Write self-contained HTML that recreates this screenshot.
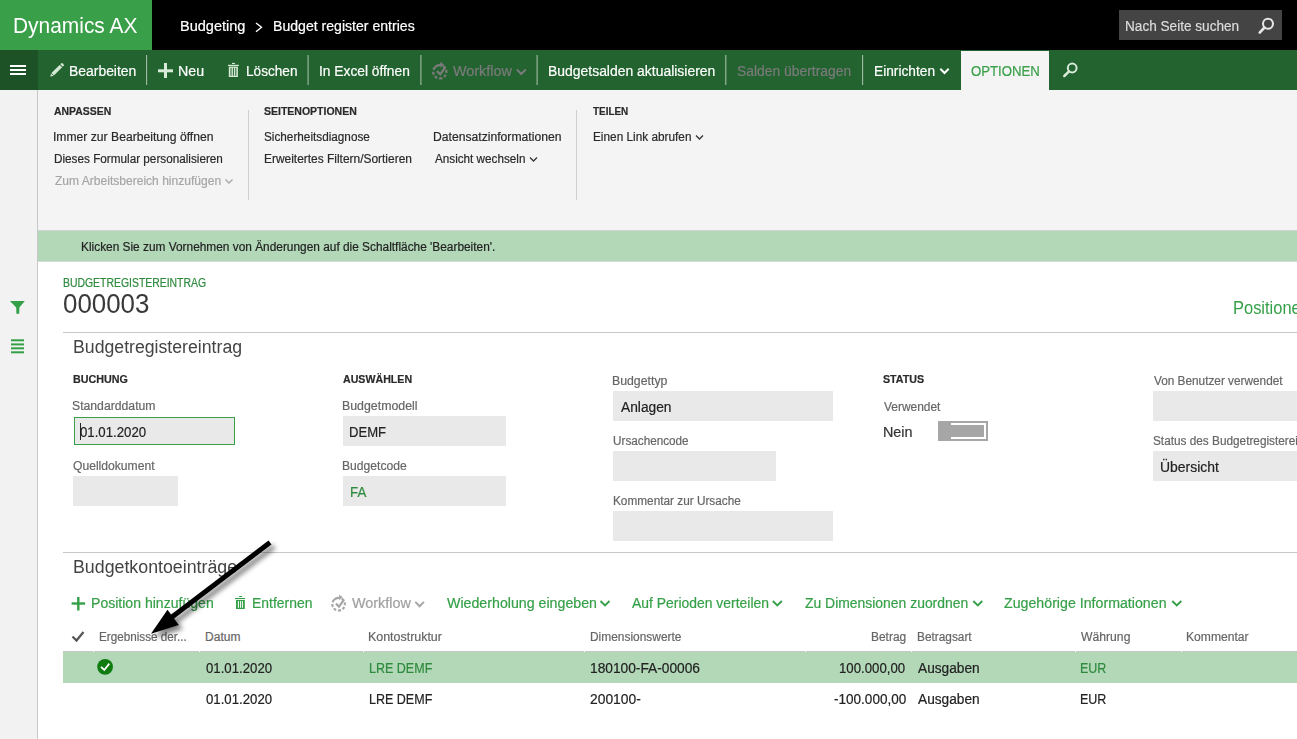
<!DOCTYPE html>
<html><head><meta charset="utf-8">
<style>
html,body{margin:0;padding:0;width:1297px;height:739px;overflow:hidden;background:#fff;font-family:"Liberation Sans",sans-serif;}
.a{position:absolute;}
.t{position:absolute;white-space:pre;line-height:1;-webkit-text-stroke:0.2px currentColor;}
svg{position:absolute;left:0;top:0;overflow:visible;}
</style></head><body>
<!-- top bar -->
<div class="a" style="left:0;top:0;width:1297px;height:50px;background:#000"></div>
<div class="a" style="left:0;top:0;width:152px;height:50px;background:#3a9f49"></div>
<div class="a" style="left:1119px;top:10px;width:163px;height:30px;background:#444"></div>
<!-- toolbar -->
<div class="a" style="left:0;top:50px;width:1297px;height:40px;background:#22632f"></div>
<div class="a" style="left:0;top:50px;width:38px;height:40px;background:#1d5126"></div>
<svg width="1297" height="100"><g stroke="#a3bca5" stroke-width="1.1"><line x1="146.6" y1="55" x2="146.6" y2="85"/><line x1="308.1" y1="55" x2="308.1" y2="85"/><line x1="420.9" y1="55" x2="420.9" y2="85"/><line x1="537.1" y1="55" x2="537.1" y2="85"/><line x1="725.8" y1="55" x2="725.8" y2="85"/><line x1="862.6" y1="55" x2="862.6" y2="85"/></g></svg>
<div class="a" style="left:961px;top:51px;width:88px;height:39px;background:#f4f4f4"></div>
<!-- options panel -->
<div class="a" style="left:0;top:90px;width:1297px;height:141px;background:#f4f4f4"></div>
<div class="a" style="left:248px;top:110px;width:1px;height:90px;background:#cfcfcf"></div>
<div class="a" style="left:576px;top:110px;width:1px;height:90px;background:#cfcfcf"></div>
<!-- sidebar -->
<div class="a" style="left:0;top:90px;width:37px;height:649px;background:#f2f2f2"></div>
<div class="a" style="left:37px;top:90px;width:1px;height:649px;background:#c8c8c8"></div>
<!-- message bar -->
<div class="a" style="left:38px;top:230px;width:1259px;height:1px;background:#d2d2d2"></div>
<div class="a" style="left:38px;top:231px;width:1259px;height:30px;background:#b2d8b8"></div>
<div class="a" style="left:38px;top:261px;width:1259px;height:1px;background:#d6dcd6"></div>
<!-- header lines -->
<div class="a" style="left:63px;top:332px;width:1234px;height:1px;background:#c8c8c8"></div>
<div class="a" style="left:63px;top:552px;width:1234px;height:1px;background:#c8c8c8"></div>
<!-- inputs -->
<div class="a" style="left:74px;top:417px;width:161px;height:28px;background:#e9e9e9;box-sizing:border-box;border:1px solid #3a9f49"></div>
<div class="a" style="left:73px;top:476px;width:105px;height:30px;background:#e9e9e9"></div>
<div class="a" style="left:343px;top:416px;width:163px;height:30px;background:#e9e9e9"></div>
<div class="a" style="left:343px;top:476px;width:163px;height:30px;background:#e9e9e9"></div>
<div class="a" style="left:613px;top:391px;width:220px;height:30px;background:#e9e9e9"></div>
<div class="a" style="left:613px;top:451px;width:163px;height:30px;background:#e9e9e9"></div>
<div class="a" style="left:613px;top:511px;width:220px;height:30px;background:#e9e9e9"></div>
<div class="a" style="left:1153px;top:391px;width:144px;height:30px;background:#e9e9e9"></div>
<div class="a" style="left:1153px;top:451px;width:144px;height:30px;background:#e9e9e9"></div>
<!-- caret -->
<div class="a" style="left:80px;top:423px;width:1px;height:17px;background:#222"></div>
<!-- toggle -->
<div class="a" style="left:938px;top:421px;width:50px;height:20px;background:#a6a6a6"></div>
<div class="a" style="left:951px;top:423px;width:35px;height:16px;background:#fff"></div>
<div class="a" style="left:951px;top:425px;width:33px;height:12px;background:#a6a6a6"></div>
<!-- grid header line -->
<div class="a" style="left:63px;top:651px;width:1234px;height:1px;background:#c6c6c6"></div>
<div class="a" style="left:93px;top:651px;width:1px;height:1px;background:#fff"></div>
<div class="a" style="left:199px;top:651px;width:1px;height:1px;background:#fff"></div>
<div class="a" style="left:363px;top:651px;width:1px;height:1px;background:#fff"></div>
<div class="a" style="left:584px;top:651px;width:1px;height:1px;background:#fff"></div>
<div class="a" style="left:805px;top:651px;width:1px;height:1px;background:#fff"></div>
<div class="a" style="left:911px;top:651px;width:1px;height:1px;background:#fff"></div>
<div class="a" style="left:1075px;top:651px;width:1px;height:1px;background:#fff"></div>
<div class="a" style="left:1181px;top:651px;width:1px;height:1px;background:#fff"></div>
<!-- selected row -->
<div class="a" style="left:63px;top:652px;width:1234px;height:31px;background:#b2d8b8"></div>

<div class="t" style="left:13.30px;top:15.10px;font-size:22px;color:#fff;transform:scaleX(0.9508);transform-origin:0 0;-webkit-text-stroke:0">Dynamics AX</div>
<div class="t" style="left:179.86px;top:19.10px;font-size:14px;color:#fff;transform:scaleX(1.0377);transform-origin:0 0">Budgeting</div>
<div class="t" style="left:272.99px;top:19.10px;font-size:14px;color:#fff;transform:scaleX(1.0058);transform-origin:0 0">Budget register entries</div>
<div class="t" style="left:1124.73px;top:18.90px;font-size:14px;color:#dcdcdc;transform:scaleX(0.9716);transform-origin:0 0">Nach Seite suchen</div>
<div class="t" style="left:68.61px;top:63.80px;font-size:14px;color:#fff;transform:scaleX(0.9939);transform-origin:0 0">Bearbeiten</div>
<div class="t" style="left:177.78px;top:63.80px;font-size:14px;color:#fff;transform:scaleX(1.0167);transform-origin:0 0">Neu</div>
<div class="t" style="left:245.63px;top:63.80px;font-size:14px;color:#fff;transform:scaleX(0.9725);transform-origin:0 0">Löschen</div>
<div class="t" style="left:318.72px;top:63.80px;font-size:14px;color:#fff;transform:scaleX(0.9835);transform-origin:0 0">In Excel öffnen</div>
<div class="t" style="left:453.00px;top:63.80px;font-size:14px;color:#7b7b7b;transform:scaleX(1.0263);transform-origin:0 0">Workflow</div>
<div class="t" style="left:548.00px;top:63.80px;font-size:14px;color:#fff;transform:scaleX(0.9952);transform-origin:0 0">Budgetsalden aktualisieren</div>
<div class="t" style="left:736.81px;top:63.80px;font-size:14px;color:#7b7b7b;transform:scaleX(0.9904);transform-origin:0 0">Salden übertragen</div>
<div class="t" style="left:873.82px;top:63.80px;font-size:14px;color:#fff;transform:scaleX(0.9803);transform-origin:0 0">Einrichten</div>
<div class="t" style="left:970.66px;top:63.80px;font-size:14px;color:#3aa04a;transform:scaleX(0.9423);transform-origin:0 0">OPTIONEN</div>
<div class="t" style="left:53.60px;top:106.25px;font-size:11px;color:#2a2a2a;font-weight:700;transform:scaleX(0.9483);transform-origin:0 0">ANPASSEN</div>
<div class="t" style="left:53.49px;top:130.90px;font-size:12px;color:#2a2a2a;transform:scaleX(1.0121);transform-origin:0 0">Immer zur Bearbeitung öffnen</div>
<div class="t" style="left:53.52px;top:152.80px;font-size:12px;color:#2a2a2a;transform:scaleX(0.9778);transform-origin:0 0">Dieses Formular personalisieren</div>
<div class="t" style="left:54.50px;top:174.80px;font-size:12px;color:#a6a6a6;transform:scaleX(1.0042);transform-origin:0 0">Zum Arbeitsbereich hinzufügen</div>
<div class="t" style="left:264.20px;top:106.25px;font-size:11px;color:#2a2a2a;font-weight:700;transform:scaleX(0.9546);transform-origin:0 0">SEITENOPTIONEN</div>
<div class="t" style="left:264.42px;top:130.80px;font-size:12px;color:#2a2a2a;transform:scaleX(0.9794);transform-origin:0 0">Sicherheitsdiagnose</div>
<div class="t" style="left:264.41px;top:152.80px;font-size:12px;color:#2a2a2a;transform:scaleX(0.9946);transform-origin:0 0">Erweitertes Filtern/Sortieren</div>
<div class="t" style="left:433.49px;top:130.80px;font-size:12px;color:#2a2a2a;transform:scaleX(1.0136);transform-origin:0 0">Datensatzinformationen</div>
<div class="t" style="left:434.50px;top:152.80px;font-size:12px;color:#2a2a2a;transform:scaleX(0.9750);transform-origin:0 0">Ansicht wechseln</div>
<div class="t" style="left:592.90px;top:106.25px;font-size:11px;color:#2a2a2a;font-weight:700;transform:scaleX(0.9000);transform-origin:0 0">TEILEN</div>
<div class="t" style="left:592.62px;top:130.80px;font-size:12px;color:#2a2a2a;transform:scaleX(0.9838);transform-origin:0 0">Einen Link abrufen</div>
<div class="t" style="left:80.51px;top:241.40px;font-size:12px;color:#222;transform:scaleX(0.9892);transform-origin:0 0">Klicken Sie zum Vornehmen von Änderungen auf die Schaltfläche 'Bearbeiten'.</div>
<div class="t" style="left:62.93px;top:277.00px;font-size:12px;color:#2f8a3e;transform:scaleX(0.8687);transform-origin:0 0">BUDGETREGISTEREINTRAG</div>
<div class="t" style="left:63.44px;top:291.05px;font-size:27px;color:#3a3a3a;transform:scaleX(0.9591);transform-origin:0 0;-webkit-text-stroke:0">000003</div>
<div class="t" style="left:1232.59px;top:298.80px;font-size:18px;color:#36a048;transform:scaleX(0.9146);transform-origin:0 0;-webkit-text-stroke:0">Positionen</div>
<div class="t" style="left:73.02px;top:338.00px;font-size:18px;color:#444;transform:scaleX(0.9824);transform-origin:0 0;-webkit-text-stroke:0">Budgetregistereintrag</div>
<div class="t" style="left:72.82px;top:374.25px;font-size:11px;color:#2a2a2a;font-weight:700;transform:scaleX(0.9764);transform-origin:0 0">BUCHUNG</div>
<div class="t" style="left:343.40px;top:374.45px;font-size:11px;color:#2a2a2a;font-weight:700;transform:scaleX(0.9662);transform-origin:0 0">AUSWÄHLEN</div>
<div class="t" style="left:883.20px;top:374.25px;font-size:11px;color:#2a2a2a;font-weight:700;transform:scaleX(0.9690);transform-origin:0 0">STATUS</div>
<div class="t" style="left:612.48px;top:374.80px;font-size:12px;color:#666666;transform:scaleX(1.0245);transform-origin:0 0">Budgettyp</div>
<div class="t" style="left:1153.60px;top:375.00px;font-size:12px;color:#666666;transform:scaleX(0.9832);transform-origin:0 0">Von Benutzer verwendet</div>
<div class="t" style="left:72.38px;top:399.70px;font-size:12px;color:#666666;transform:scaleX(1.0175);transform-origin:0 0">Standarddatum</div>
<div class="t" style="left:342.37px;top:399.50px;font-size:12px;color:#666666;transform:scaleX(1.0292);transform-origin:0 0">Budgetmodell</div>
<div class="t" style="left:883.50px;top:400.70px;font-size:12px;color:#666666;transform:scaleX(0.9947);transform-origin:0 0">Verwendet</div>
<div class="t" style="left:80.40px;top:424.70px;font-size:14px;color:#222;transform:scaleX(0.9429);transform-origin:0 0">01.01.2020</div>
<div class="t" style="left:348.97px;top:425.20px;font-size:14px;color:#222;transform:scaleX(0.9342);transform-origin:0 0">DEMF</div>
<div class="t" style="left:620.70px;top:400.10px;font-size:14px;color:#222;transform:scaleX(0.9824);transform-origin:0 0">Anlagen</div>
<div class="t" style="left:882.77px;top:424.70px;font-size:14px;color:#333;transform:scaleX(1.0259);transform-origin:0 0">Nein</div>
<div class="t" style="left:612.52px;top:434.90px;font-size:12px;color:#666666;transform:scaleX(0.9776);transform-origin:0 0">Ursachencode</div>
<div class="t" style="left:1152.62px;top:435.30px;font-size:12px;color:#666666;transform:scaleX(0.9832);transform-origin:0 0">Status des Budgetregistereintrags</div>
<div class="t" style="left:1159.71px;top:460.10px;font-size:14px;color:#222;transform:scaleX(0.9948);transform-origin:0 0">Übersicht</div>
<div class="t" style="left:73.40px;top:459.80px;font-size:12px;color:#666666;transform:scaleX(1.0099);transform-origin:0 0">Quelldokument</div>
<div class="t" style="left:342.39px;top:460.40px;font-size:12px;color:#666666;transform:scaleX(1.0095);transform-origin:0 0">Budgetcode</div>
<div class="t" style="left:349.55px;top:485.10px;font-size:14px;color:#2f8a3e;transform:scaleX(0.9500);transform-origin:0 0">FA</div>
<div class="t" style="left:612.52px;top:494.90px;font-size:12px;color:#666666;transform:scaleX(0.9829);transform-origin:0 0">Kommentar zur Ursache</div>
<div class="t" style="left:72.81px;top:557.50px;font-size:18px;color:#444;transform:scaleX(0.9878);transform-origin:0 0;-webkit-text-stroke:0">Budgetkontoeinträge</div>
<div class="t" style="left:90.70px;top:596.10px;font-size:14px;color:#36a048;transform:scaleX(1.0041);transform-origin:0 0">Position hinzufügen</div>
<div class="t" style="left:252.21px;top:596.10px;font-size:14px;color:#36a048;transform:scaleX(0.9949);transform-origin:0 0">Entfernen</div>
<div class="t" style="left:351.70px;top:596.10px;font-size:14px;color:#a0a0a0;transform:scaleX(1.0263);transform-origin:0 0">Workflow</div>
<div class="t" style="left:446.80px;top:596.10px;font-size:14px;color:#36a048;transform:scaleX(1.0143);transform-origin:0 0">Wiederholung eingeben</div>
<div class="t" style="left:631.80px;top:596.10px;font-size:14px;color:#36a048;transform:scaleX(0.9942);transform-origin:0 0">Auf Perioden verteilen</div>
<div class="t" style="left:805.10px;top:596.10px;font-size:14px;color:#36a048;transform:scaleX(0.9939);transform-origin:0 0">Zu Dimensionen zuordnen</div>
<div class="t" style="left:1004.00px;top:596.10px;font-size:14px;color:#36a048;transform:scaleX(1.0137);transform-origin:0 0">Zugehörige Informationen</div>
<div class="t" style="left:98.63px;top:630.80px;font-size:12px;color:#666;transform:scaleX(0.9750);transform-origin:0 0">Ergebnisse der...</div>
<div class="t" style="left:205.10px;top:630.80px;font-size:12px;color:#666">Datum</div>
<div class="t" style="left:368.46px;top:630.80px;font-size:12px;color:#666;transform:scaleX(1.0357);transform-origin:0 0">Kontostruktur</div>
<div class="t" style="left:589.61px;top:630.80px;font-size:12px;color:#666;transform:scaleX(0.9934);transform-origin:0 0">Dimensionswerte</div>
<div class="t" style="left:870.71px;top:630.80px;font-size:12px;color:#666;transform:scaleX(0.9941);transform-origin:0 0">Betrag</div>
<div class="t" style="left:916.71px;top:630.80px;font-size:12px;color:#666;transform:scaleX(0.9870);transform-origin:0 0">Betragsart</div>
<div class="t" style="left:1081.20px;top:630.80px;font-size:12px;color:#666;transform:scaleX(1.0146);transform-origin:0 0">Währung</div>
<div class="t" style="left:1186.19px;top:630.80px;font-size:12px;color:#666;transform:scaleX(1.0082);transform-origin:0 0">Kommentar</div>
<div class="t" style="left:205.50px;top:661.10px;font-size:14px;color:#222;transform:scaleX(0.9429);transform-origin:0 0">01.01.2020</div>
<div class="t" style="left:368.61px;top:661.10px;font-size:14px;color:#2f8a3e;transform:scaleX(0.8942);transform-origin:0 0">LRE DEMF</div>
<div class="t" style="left:589.62px;top:661.10px;font-size:14px;color:#222;transform:scaleX(0.9811);transform-origin:0 0">180100-FA-00006</div>
<div class="t" style="left:839.46px;top:661.10px;font-size:14px;color:#222;transform:scaleX(0.9435);transform-origin:0 0">100.000,00</div>
<div class="t" style="left:917.70px;top:661.10px;font-size:14px;color:#222;transform:scaleX(0.9774);transform-origin:0 0">Ausgaben</div>
<div class="t" style="left:1080.31px;top:661.10px;font-size:14px;color:#2f8a3e;transform:scaleX(0.8929);transform-origin:0 0">EUR</div>
<div class="t" style="left:205.50px;top:691.90px;font-size:14px;color:#222;transform:scaleX(0.9429);transform-origin:0 0">01.01.2020</div>
<div class="t" style="left:368.61px;top:691.90px;font-size:14px;color:#222;transform:scaleX(0.8942);transform-origin:0 0">LRE DEMF</div>
<div class="t" style="left:589.61px;top:691.90px;font-size:14px;color:#222;transform:scaleX(0.9880);transform-origin:0 0">200100-</div>
<div class="t" style="left:833.93px;top:691.90px;font-size:14px;color:#222;transform:scaleX(0.9671);transform-origin:0 0">-100.000,00</div>
<div class="t" style="left:917.70px;top:691.90px;font-size:14px;color:#222;transform:scaleX(0.9774);transform-origin:0 0">Ausgaben</div>
<div class="t" style="left:1080.31px;top:691.90px;font-size:14px;color:#222;transform:scaleX(0.8929);transform-origin:0 0">EUR</div>
<svg width="1297" height="739">
<defs>
<g id="wf">
<path d="M3.15,-5.46 A6.3,6.3 0 1 1 -3.15,-5.46" fill="none" stroke-width="2.1" stroke-dasharray="2.9 1.7"/>
<path d="M-4.6,-4.3 A6.3,6.3 0 0 1 1.2,-6.2" fill="none" stroke-width="2.1"/>
<path d="M0.4,-9.6 L4.1,-6.9 L0.8,-3.9 Z" stroke="none"/>
<polyline points="-2.7,-0.6 0.4,2.4 5.4,-4.6" fill="none" stroke-width="2.2"/>
</g>
</defs>
<!-- breadcrumb chevron -->
<polyline points="256,23 261.5,27.3 256,31.8" fill="none" stroke="#fff" stroke-width="1.4"/>
<!-- top search icon -->
<circle cx="1268" cy="23.8" r="5" fill="none" stroke="#e6e6e6" stroke-width="2"/>
<line x1="1264.5" y1="27.5" x2="1259.7" y2="32.6" stroke="#e6e6e6" stroke-width="2.6" stroke-linecap="round"/>
<!-- hamburger -->
<rect x="10" y="65" width="16" height="2" fill="#fff"/>
<rect x="10" y="69" width="16" height="2" fill="#fff"/>
<rect x="10" y="73" width="16" height="2" fill="#fff"/>
<!-- pencil -->
<g fill="#d6e8d6">
<polygon points="50.40,76.60 53.48,76.00 51.00,73.52"/>
<polygon points="53.90,75.57 62.10,67.37 59.63,64.90 51.43,73.10"/>
<polygon points="62.81,66.67 63.94,65.53 63.34,63.66 61.47,63.06 60.33,64.19"/>
</g>
<!-- plus -->
<rect x="158" y="69.3" width="15" height="3" fill="#d8ead8"/>
<rect x="164" y="63" width="3" height="15" fill="#d8ead8"/>
<!-- trash toolbar -->
<g fill="#d8ead8">
<rect x="232" y="62.9" width="2.9" height="1.1"/>
<rect x="228" y="64.8" width="10.9" height="1.2"/>
<rect x="228.8" y="66.6" width="9.1" height="10.4"/>
</g>
<g fill="#22632f">
<rect x="230.5" y="67.8" width="1" height="8"/>
<rect x="232.9" y="67.8" width="1" height="8"/>
<rect x="235.3" y="67.8" width="1" height="8"/>
</g>
<!-- toolbar workflow icon -->
<use href="#wf" transform="translate(439.8,71.8) scale(1.05)" fill="#7b7b7b" stroke="#7b7b7b"/>
<!-- chevrons toolbar -->
<polyline points="516.8,69.4 521.3,74 525.8,69.4" fill="none" stroke="#7b7b7b" stroke-width="2"/>
<polyline points="940.3,68.8 944.5,73 948.7,68.8" fill="none" stroke="#fff" stroke-width="2"/>
<!-- toolbar search -->
<circle cx="1072.2" cy="68" r="4.4" fill="none" stroke="#d8ead8" stroke-width="2"/>
<line x1="1069" y1="71.3" x2="1064.3" y2="76" stroke="#d8ead8" stroke-width="2.5" stroke-linecap="round"/>
<!-- options chevrons -->
<polyline points="225.5,179.5 229,183 232.5,179.5" fill="none" stroke="#a6a6a6" stroke-width="1.3"/>
<polyline points="530,157.5 533.5,161 537,157.5" fill="none" stroke="#333" stroke-width="1.3"/>
<polyline points="696,135.5 699.5,139 703,135.5" fill="none" stroke="#333" stroke-width="1.3"/>
<!-- sidebar filter -->
<path d="M10,301 L24.8,301 L19.4,307.5 L19.2,313.7 L16.4,313.7 L16.2,307.5 Z" fill="#33a047"/>
<!-- sidebar list -->
<rect x="11" y="339.3" width="13" height="2" fill="#33a047"/>
<rect x="11" y="343.4" width="13" height="2" fill="#33a047"/>
<rect x="11" y="347.3" width="13" height="2" fill="#33a047"/>
<rect x="11" y="351.3" width="13" height="2" fill="#33a047"/>
<!-- grid toolbar plus -->
<rect x="71.6" y="602.3" width="13.5" height="2.4" fill="#36a048"/>
<rect x="77.1" y="597" width="2.4" height="13.5" fill="#36a048"/>
<!-- grid trash -->
<g fill="#36a048">
<rect x="239" y="595.9" width="3.1" height="1.1" rx="0.5"/>
<rect x="235" y="598" width="10.1" height="1.1"/>
<rect x="236" y="600" width="8.8" height="9"/>
</g>
<g fill="#fff">
<rect x="237.9" y="601" width="1" height="6.8"/>
<rect x="240.1" y="601" width="1" height="6.8"/>
<rect x="242.1" y="601" width="0.9" height="6.8"/>
</g>
<!-- grid workflow -->
<use href="#wf" transform="translate(338.6,604.2)" fill="#a6a6a6" stroke="#a6a6a6"/>
<polyline points="415.3,601.9 419.6,606.3 423.9,601.9" fill="none" stroke="#a6a6a6" stroke-width="2"/>
<polyline points="600.5,601 605,605.5 609.5,601" fill="none" stroke="#36a048" stroke-width="1.9"/>
<polyline points="772.8,601 777.3,605.5 781.8,601" fill="none" stroke="#36a048" stroke-width="1.9"/>
<polyline points="973.3,601 977.8,605.5 982.3,601" fill="none" stroke="#36a048" stroke-width="1.9"/>
<polyline points="1172.3,601 1176.8,605.5 1181.3,601" fill="none" stroke="#36a048" stroke-width="1.9"/>
<!-- grid header check -->
<polyline points="72.5,636.5 76.5,640.5 83.5,632" fill="none" stroke="#555" stroke-width="2.2"/>
<!-- row check circle -->
<circle cx="105.1" cy="666.8" r="7.9" fill="#107c10"/>
<polyline points="101,666.8 104.3,670 109.3,663.6" fill="none" stroke="#fff" stroke-width="1.8"/>
</svg>
<!-- arrow overlay -->
<svg width="1297" height="739">
<defs><filter id="sh" x="-30%" y="-30%" width="160%" height="160%"><feGaussianBlur stdDeviation="2.6"/></filter></defs>
<g transform="translate(4,4)" opacity="0.5" filter="url(#sh)">
<line x1="270" y1="542.5" x2="172" y2="617" stroke="#000" stroke-width="4.9"/>
<path d="M151,633.8 L167.5,609.7 L178.8,624.9 Z" fill="#000"/>
</g>
<line x1="270" y1="542.5" x2="172" y2="617" stroke="#000" stroke-width="4.9"/>
<path d="M151,633.8 L167.5,609.7 L178.8,624.9 Z" fill="#000"/>
</svg>

</body></html>
